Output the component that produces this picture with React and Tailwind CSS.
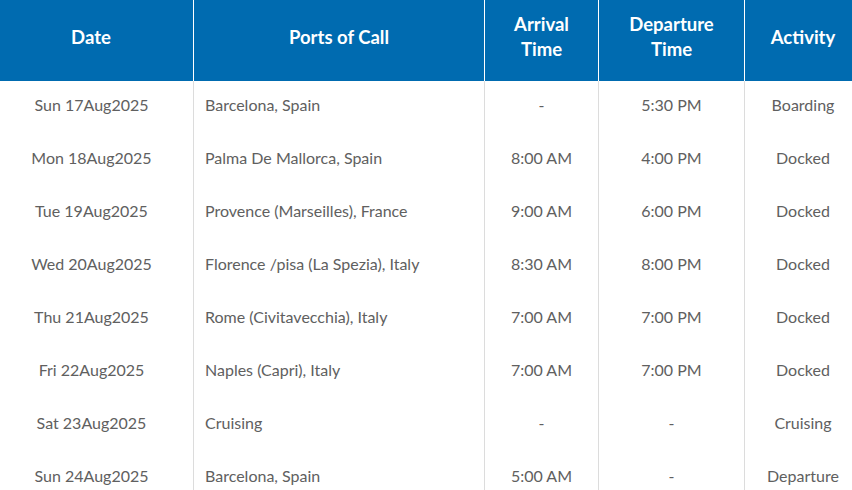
import React from "react";

const rows = [
  ["Sun 17Aug2025", "Barcelona, Spain", "-", "5:30 PM", "Boarding"],
  ["Mon 18Aug2025", "Palma De Mallorca, Spain", "8:00 AM", "4:00 PM", "Docked"],
  ["Tue 19Aug2025", "Provence (Marseilles), France", "9:00 AM", "6:00 PM", "Docked"],
  ["Wed 20Aug2025", "Florence /pisa (La Spezia), Italy", "8:30 AM", "8:00 PM", "Docked"],
  ["Thu 21Aug2025", "Rome (Civitavecchia), Italy", "7:00 AM", "7:00 PM", "Docked"],
  ["Fri 22Aug2025", "Naples (Capri), Italy", "7:00 AM", "7:00 PM", "Docked"],
  ["Sat 23Aug2025", "Cruising", "-", "-", "Cruising"],
  ["Sun 24Aug2025", "Barcelona, Spain", "5:00 AM", "-", "Departure"],
];

export default function App() {
  return (
    <div className="w-[852px] h-[490px] overflow-hidden bg-white" style={{ fontFamily: "Lato, 'Open Sans', sans-serif" }}>
      <div className="w-[870px]">
        <div className="flex h-[81px] bg-[#006bb0] text-white font-bold text-[18.5px] leading-[25px] text-center">
          <div className="w-[193px] flex items-center justify-center pb-[7px] pr-[11px]">Date</div>
          <div className="w-[291px] border-l border-white flex items-center justify-center pb-[7px]">Ports of Call</div>
          <div className="w-[114px] border-l border-white flex items-center justify-center pb-[7px]">Arrival<br />Time</div>
          <div className="w-[146px] border-l border-white flex items-center justify-center pb-[7px]">Departure<br />Time</div>
          <div className="w-[117px] border-l border-white flex items-center justify-center pb-[7px]">Activity</div>
        </div>
        {rows.map((r, i) => (
          <div key={i} className="flex h-[53px] text-[16px] text-[#606060]">
            <div className="w-[193px] flex items-center justify-center pb-[6px] pr-[10px]">{r[0]}</div>
            <div className="w-[291px] border-l border-[#dcdcdc] flex items-center pl-[11px] pb-[6px]">{r[1]}</div>
            <div className="w-[114px] border-l border-[#dcdcdc] flex items-center justify-center pb-[6px]">{r[2]}</div>
            <div className="w-[146px] border-l border-[#dcdcdc] flex items-center justify-center pb-[6px]">{r[3]}</div>
            <div className="w-[117px] border-l border-[#dcdcdc] flex items-center justify-center pb-[6px]">{r[4]}</div>
          </div>
        ))}
      </div>
    </div>
  );
}
